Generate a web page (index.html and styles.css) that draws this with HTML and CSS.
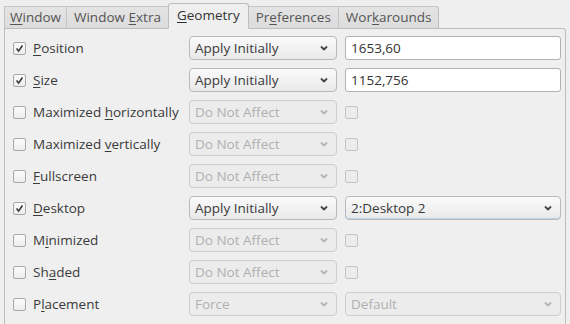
FILE: index.html
```html
<!DOCTYPE html>
<html>
<head>
<meta charset="utf-8">
<link rel="stylesheet" href="styles.css">
</head>
<body>
<div class="tabs">
  <div class="tab first"><u>W</u>indow</div>
  <div class="tab">Window <u>E</u>xtra</div>
  <div class="tab active"><u>G</u>eometry</div>
  <div class="tab">Pr<u>e</u>ferences</div>
  <div class="tab">Wor<u>k</u>arounds</div>
</div>
<div class="panel">
  <div class="grid">
    <label class="opt"><span class="cb checked"><svg viewBox="0 0 13 13"><path d="M3 6.5 L5.5 9.5 L10 3" /></svg></span><span><u>P</u>osition</span></label>
    <div class="combo"><span>Apply Initially</span><svg class="chev" viewBox="0 0 8 6"><path d="M1 1.5 L4 4.5 L7 1.5"/></svg></div>
    <div class="input">1653,60</div>

    <label class="opt"><span class="cb checked"><svg viewBox="0 0 13 13"><path d="M3 6.5 L5.5 9.5 L10 3" /></svg></span><span><u>S</u>ize</span></label>
    <div class="combo"><span>Apply Initially</span><svg class="chev" viewBox="0 0 8 6"><path d="M1 1.5 L4 4.5 L7 1.5"/></svg></div>
    <div class="input">1152,756</div>

    <label class="opt"><span class="cb"></span><span>Maximized <u>h</u>orizontally</span></label>
    <div class="combo disabled"><span>Do Not Affect</span><svg class="chev" viewBox="0 0 8 6"><path d="M1 1.5 L4 4.5 L7 1.5"/></svg></div>
    <div class="cell"><span class="cb small"></span></div>

    <label class="opt"><span class="cb"></span><span>Maximized <u>v</u>ertically</span></label>
    <div class="combo disabled"><span>Do Not Affect</span><svg class="chev" viewBox="0 0 8 6"><path d="M1 1.5 L4 4.5 L7 1.5"/></svg></div>
    <div class="cell"><span class="cb small"></span></div>

    <label class="opt"><span class="cb"></span><span><u>F</u>ullscreen</span></label>
    <div class="combo disabled"><span>Do Not Affect</span><svg class="chev" viewBox="0 0 8 6"><path d="M1 1.5 L4 4.5 L7 1.5"/></svg></div>
    <div class="cell"><span class="cb small"></span></div>

    <label class="opt"><span class="cb checked"><svg viewBox="0 0 13 13"><path d="M3 6.5 L5.5 9.5 L10 3" /></svg></span><span><u>D</u>esktop</span></label>
    <div class="combo"><span>Apply Initially</span><svg class="chev" viewBox="0 0 8 6"><path d="M1 1.5 L4 4.5 L7 1.5"/></svg></div>
    <div class="combo focus"><span>2:Desktop 2</span><svg class="chev" viewBox="0 0 8 6"><path d="M1 1.5 L4 4.5 L7 1.5"/></svg></div>

    <label class="opt"><span class="cb"></span><span>M<u>i</u>nimized</span></label>
    <div class="combo disabled"><span>Do Not Affect</span><svg class="chev" viewBox="0 0 8 6"><path d="M1 1.5 L4 4.5 L7 1.5"/></svg></div>
    <div class="cell"><span class="cb small"></span></div>

    <label class="opt"><span class="cb"></span><span>Sh<u>a</u>ded</span></label>
    <div class="combo disabled"><span>Do Not Affect</span><svg class="chev" viewBox="0 0 8 6"><path d="M1 1.5 L4 4.5 L7 1.5"/></svg></div>
    <div class="cell"><span class="cb small"></span></div>

    <label class="opt"><span class="cb"></span><span>P<u>l</u>acement</span></label>
    <div class="combo disabled"><span>Force</span><svg class="chev" viewBox="0 0 8 6"><path d="M1 1.5 L4 4.5 L7 1.5"/></svg></div>
    <div class="combo disabled"><span>Default</span><svg class="chev" viewBox="0 0 8 6"><path d="M1 1.5 L4 4.5 L7 1.5"/></svg></div>
  </div>
</div>
</body>
</html>
```

FILE: styles.css
```css
html, body {
  margin: 0;
  padding: 0;
  background: #efefef;
  font-family: "Open Sans", "DejaVu Sans", sans-serif;
  font-size: 13.5px;
  color: #3a3a3a;
  overflow: hidden;
}
u {
  text-decoration: underline;
  text-underline-offset: 2px;
}
.tabs {
  display: flex;
  align-items: flex-end;
  padding: 4px 0 0 4px;
  height: 24px;
  position: relative;
  z-index: 1;
}
.tab {
  height: 21px;
  line-height: 21px;
  padding: 0 7px;
  background: linear-gradient(#e4e4e4, #dcdcdc);
  border: 1px solid #c4c4c4;
  border-bottom: none;
  border-right: none;
  color: #555;
}
.tab.first {
  padding: 0 5px;
}
.tab:last-child {
  border-right: 1px solid #bdbdbd;
  border-radius: 0 3px 0 0;
}
.tab.active {
  height: 24px;
  line-height: 23px;
  background: #efefef;
  border: 1px solid #bdbdbd;
  border-bottom: 1px solid #efefef;
  border-radius: 3px 3px 0 0;
  margin-bottom: -1px;
  color: #333;
  padding: 0 8px;
}
.tab.active + .tab {
  border-left: none;
}
.panel {
  margin: 0 4px 0 4px;
  border: 1px solid #bdbdbd;
  border-bottom: none;
  border-radius: 0 3px 0 0;
  height: 296px;
  box-sizing: border-box;
  padding: 7px 4px 0 8px;
}
.grid {
  display: grid;
  grid-template-columns: 168px 148px 1fr;
  column-gap: 8px;
  row-gap: 8px;
  grid-auto-rows: 24px;
}
.opt {
  display: flex;
  align-items: center;
  gap: 7px;
  color: #3a3a3a;
}
.cb {
  width: 11px;
  height: 11px;
  border: 1px solid #a8a8a8;
  border-radius: 2px;
  background: linear-gradient(#fbfbfb, #ececec);
  display: inline-flex;
  align-items: center;
  justify-content: center;
  flex: none;
}
.cb svg {
  width: 13px;
  height: 13px;
  fill: none;
  stroke: #333;
  stroke-width: 1.8;
}
.cb.small {
  border-color: #c4c4c4;
  background: #ececec;
}
.cell {
  display: flex;
  align-items: center;
}
.combo {
  display: flex;
  align-items: center;
  justify-content: space-between;
  border: 1px solid #b9b9b9;
  border-radius: 4px;
  background: linear-gradient(#fafafa, #e9e9e9);
  padding: 0 8px 0 5px;
  color: #3a3a3a;
  box-sizing: border-box;
}
.combo .chev {
  width: 8px;
  height: 6px;
  fill: none;
  stroke: #444;
  stroke-width: 1.8;
}
.combo.disabled {
  color: #b0b0b0;
  background: #ececec;
  border-color: #cdcdcd;
}
.combo.disabled .chev {
  stroke: #b4b4b4;
}
.combo.focus {
  box-shadow: inset 0 -1px 0 #b9d3ea;
}
.input {
  background: #fff;
  border: 1px solid #b2b2b2;
  border-radius: 3px;
  padding: 0 5px;
  display: flex;
  align-items: center;
  box-sizing: border-box;
  color: #333;
}
```
